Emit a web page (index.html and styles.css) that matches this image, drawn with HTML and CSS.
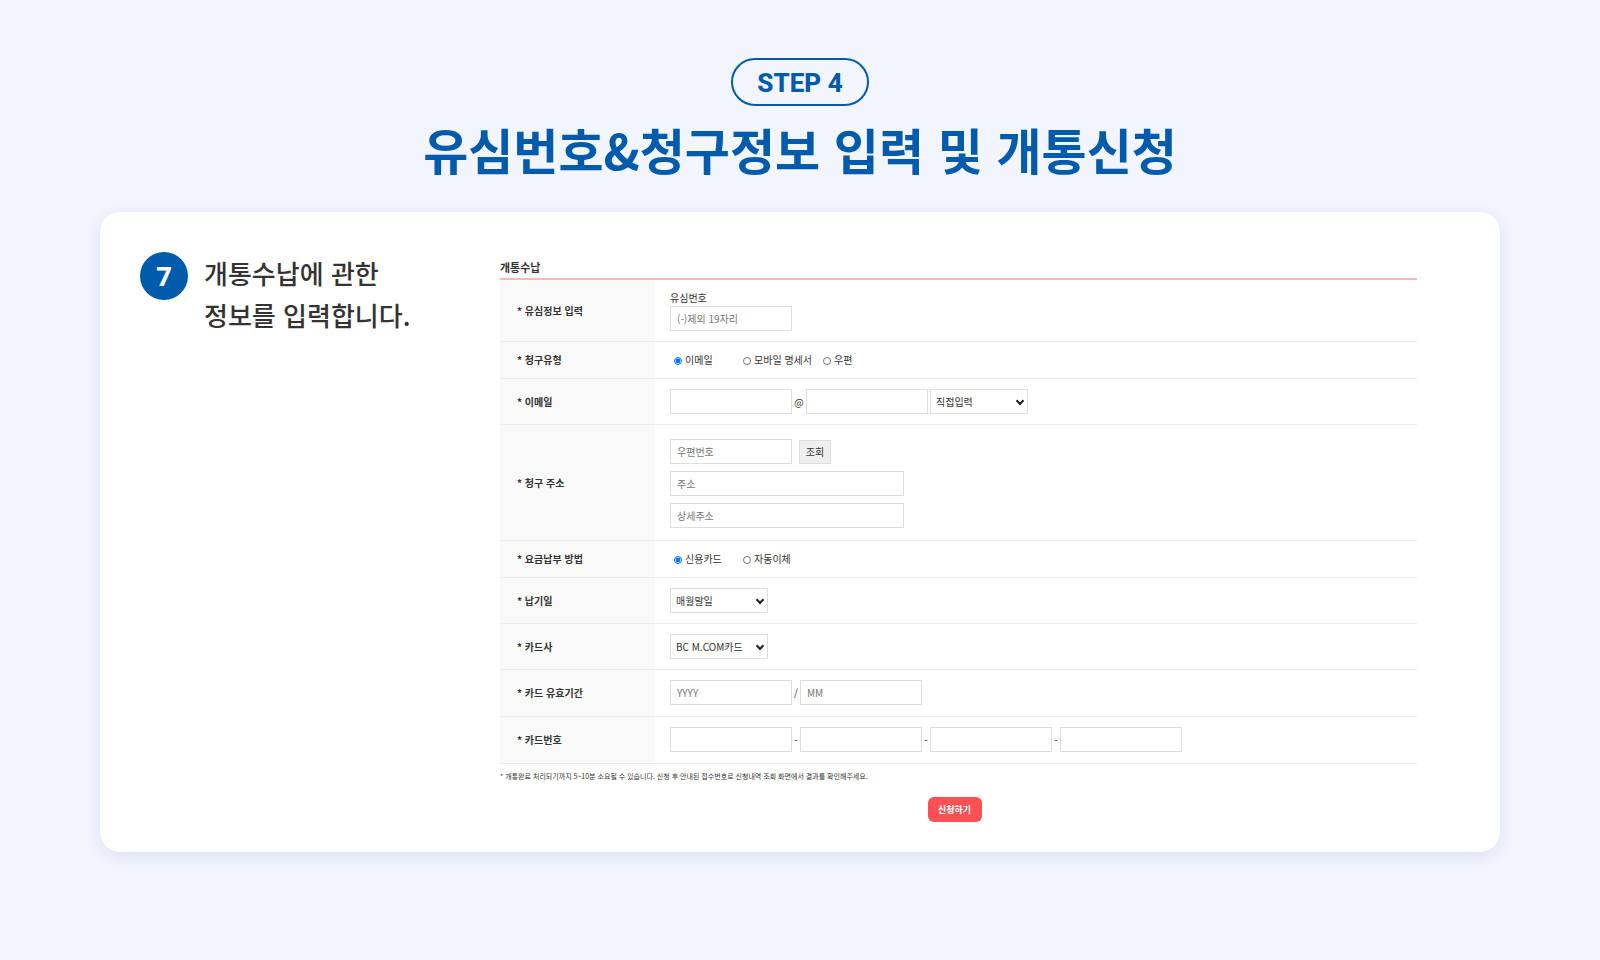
FILE: index.html
```html
<!DOCTYPE html>
<html lang="ko">
<head>
    <meta charset="UTF-8">
    <meta name="viewport" content="width=device-width, initial-scale=1.0">
    <title>유심번호&amp;청구정보 입력 및 개통신청</title>
    <link rel="stylesheet" href="styles.css">
</head>
<body>
    <header class="step-header">
        <span class="step-badge">STEP 4</span>
        <h1>유심번호&amp;청구정보 입력 및 개통신청</h1>
    </header>

    <main class="card">
        <div class="guide">
            <span class="guide-number">7</span>
            <p>개통수납에 관한<br>정보를 입력합니다.</p>
        </div>

        <form class="apply-form">
            <h2>개통수납</h2>
            <table class="form-table">
                <tr>
                    <th scope="row">* 유심정보 입력</th>
                    <td>
                        <label class="top-label" for="usim">유심번호</label>
                        <input type="text" class="text" id="usim" placeholder="(-)제외 19자리">
                    </td>
                </tr>
                <tr>
                    <th scope="row">* 청구유형</th>
                    <td>
                        <div class="radios">
                            <label><input type="radio" name="billType" checked>이메일</label>
                            <label><input type="radio" name="billType">모바일 명세서</label>
                            <label><input type="radio" name="billType">우편</label>
                        </div>
                    </td>
                </tr>
                <tr>
                    <th scope="row">* 이메일</th>
                    <td>
                        <div class="fields">
                            <input type="text" class="text" aria-label="이메일 아이디">
                            <span class="sep at">@</span>
                            <input type="text" class="text" aria-label="이메일 도메인">
                            <div class="select domain">
                                <select aria-label="도메인 선택">
                                    <option>직접입력</option>
                                </select>
                            </div>
                        </div>
                    </td>
                </tr>
                <tr>
                    <th scope="row">* 청구 주소</th>
                    <td class="address">
                        <div class="fields">
                            <input type="text" class="text" placeholder="우편번호" aria-label="우편번호">
                            <button type="button" class="btn-search">조회</button>
                        </div>
                        <input type="text" class="text wide" placeholder="주소" aria-label="주소">
                        <input type="text" class="text wide" placeholder="상세주소" aria-label="상세주소">
                    </td>
                </tr>
                <tr>
                    <th scope="row">* 요금납부 방법</th>
                    <td>
                        <div class="radios">
                            <label><input type="radio" name="payType" checked>신용카드</label>
                            <label><input type="radio" name="payType">자동이체</label>
                        </div>
                    </td>
                </tr>
                <tr>
                    <th scope="row"><label for="payDay">* 납기일</label></th>
                    <td>
                        <div class="select">
                            <select id="payDay">
                                <option>매월말일</option>
                            </select>
                        </div>
                    </td>
                </tr>
                <tr>
                    <th scope="row"><label for="cardCompany">* 카드사</label></th>
                    <td>
                        <div class="select">
                            <select id="cardCompany">
                                <option>BC M.COM카드</option>
                            </select>
                        </div>
                    </td>
                </tr>
                <tr>
                    <th scope="row">* 카드 유효기간</th>
                    <td class="card-info">
                        <div class="fields">
                            <input type="text" class="text" placeholder="YYYY" aria-label="유효기간 년">
                            <span class="sep">/</span>
                            <input type="text" class="text" placeholder="MM" aria-label="유효기간 월">
                        </div>
                    </td>
                </tr>
                <tr>
                    <th scope="row">* 카드번호</th>
                    <td class="card-info">
                        <div class="fields">
                            <input type="text" class="text" aria-label="카드번호 1">
                            <span class="sep">-</span>
                            <input type="text" class="text" aria-label="카드번호 2">
                            <span class="sep">-</span>
                            <input type="text" class="text" aria-label="카드번호 3">
                            <span class="sep">-</span>
                            <input type="text" class="text" aria-label="카드번호 4">
                        </div>
                    </td>
                </tr>
            </table>
            <p class="note">* 개통완료 처리되기까지 5~10분 소요될 수 있습니다. 신청 후 안내된 접수번호로 신청내역 조회 화면에서 결과를 확인해주세요.</p>
            <div class="submit">
                <button type="button" class="btn-apply">신청하기</button>
            </div>
        </form>
    </main>
</body>
</html>
```
FILE: styles.css
```css
* {
    box-sizing: border-box;
}
body {
    margin: 0;
    padding: 58px 100px 108px;
    min-height: 100vh;
    background-color: #f2f5fd;
    color: #333;
    font-family: "Noto Sans CJK KR", sans-serif;
}
h1, h2, p {
    margin: 0;
}
input, select, button {
    font-family: inherit;
}
.step-header {
    display: flex;
    flex-direction: column;
    align-items: center;
    gap: 8px;
    color: #005bac;
}
.step-badge {
    height: 48px;
    padding: 0 24px;
    border: 2px solid #005bac;
    border-radius: 24px;
    font-family: Roboto, sans-serif;
    font-size: 26px;
    font-weight: 800;
    line-height: 46px;
}
h1 {
    font-size: 49px;
    font-weight: 700;
    line-height: 70px;
}
.card {
    display: grid;
    grid-template-columns: 320px 1fr;
    gap: 40px;
    margin-top: 28px;
    padding: 40px 83px 30px 40px;
    background: #fff;
    border-radius: 20px;
    box-shadow: 0 4px 16px rgba(0, 50, 180, 0.1);
}
.guide {
    display: flex;
    align-items: flex-start;
    gap: 16px;
}
.guide-number {
    width: 48px;
    height: 48px;
    border-radius: 50%;
    background: #005bac;
    color: #fff;
    font-family: "Noto Sans", sans-serif;
    font-size: 27px;
    font-weight: 700;
    line-height: 47px;
    text-align: center;
}
.guide p {
    font-size: 26px;
    font-weight: 500;
    line-height: 42px;
}
.apply-form {
    padding-top: 5px;
    font-size: 10px;
}
h2 {
    padding-bottom: 1px;
    font-size: 11px;
    font-weight: 700;
    line-height: 20px;
}
.form-table {
    width: 100%;
    border-collapse: separate;
    border-spacing: 0;
    border-top: 2px solid #ffb6ba;
}
.form-table th,
.form-table td {
    border-bottom: 1px solid #ebebeb;
    line-height: 16px;
    text-align: left;
}
.form-table th {
    width: 155px;
    padding: 0 0 0 17px;
    background: #f9f9f9;
    font-weight: 700;
}
.form-table td {
    padding: 10px 0 10px 15px;
}
.form-table .address {
    padding: 14px 0 12px 15px;
}
.form-table .card-info {
    padding-bottom: 11px;
}
.top-label {
    display: block;
}
.text,
select {
    display: block;
    height: 25px;
    border: 1px solid #ddd;
    border-radius: 0;
    background-color: #fff;
    color: #333;
    font-size: 10px;
}
.text {
    width: 122px;
    padding: 0 6px;
}
.text::placeholder {
    color: #757575;
}
.select {
    position: relative;
    width: 98px;
}
.select::after {
    content: "";
    position: absolute;
    top: 9px;
    right: 5px;
    width: 4px;
    height: 4px;
    border: solid #222;
    border-width: 0 2px 2px 0;
    transform: rotate(45deg);
    pointer-events: none;
}
select {
    width: 100%;
    padding: 0 5px;
    appearance: none;
}
.domain {
    margin-left: 2px;
}
.wide {
    width: 234px;
    margin-top: 7px;
}
.fields {
    display: flex;
    align-items: center;
}
.sep {
    width: 8px;
    text-align: center;
}
.at {
    width: 14px;
}
.radios {
    display: flex;
    gap: 11px;
    padding-left: 4px;
}
.radios label {
    display: flex;
    align-items: center;
    gap: 3px;
    min-width: 58px;
}
.radios input {
    width: 8px;
    height: 8px;
    margin: 2px 0 0;
}
.btn-search {
    width: 32px;
    height: 24px;
    margin-left: 7px;
    padding: 0;
    border: 1px solid #ddd;
    background: #efefef;
    color: #333;
    font-size: 10px;
}
.note {
    margin-top: 6px;
    font-size: 7px;
    line-height: 12px;
}
.submit {
    margin-top: 15px;
    padding-right: 8px;
    text-align: center;
}
.btn-apply {
    width: 54px;
    height: 25px;
    padding: 0;
    border: none;
    border-radius: 6px;
    background: #ff5153;
    color: #fff;
    font-size: 9px;
    font-weight: 700;
}
```
